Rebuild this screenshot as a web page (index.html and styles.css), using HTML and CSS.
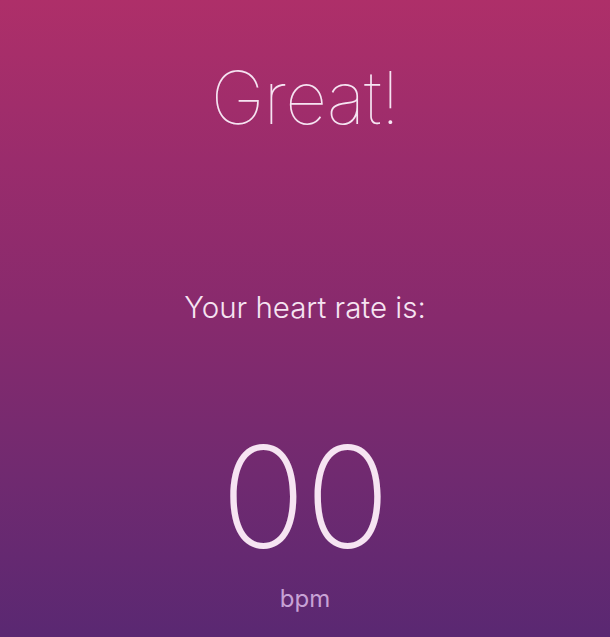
FILE: index.html
```html
<!DOCTYPE html>
<html>
<head>
<meta charset="utf-8">
<link rel="stylesheet" href="styles.css">
</head>
<body>
<main class="screen">
  <h1 class="title">Great!</h1>
  <p class="label">Your heart rate is:</p>
  <div class="rate">00</div>
  <div class="unit">bpm</div>
</main>
</body>
</html>
```
FILE: styles.css
```css
html, body {
  margin: 0;
  padding: 0;
}
.screen {
  width: 610px;
  height: 637px;
  box-sizing: border-box;
  background: linear-gradient(180deg, #ae2f69 0%, #9a2c6c 25%, #872a6d 50%, #702a70 75%, #5a2872 100%);
  display: flex;
  flex-direction: column;
  align-items: center;
  font-family: Inter, "Noto Sans", sans-serif;
  color: #f6e4f2;
  overflow: hidden;
}
.title {
  margin: 58px 0 0;
  font-size: 73px;
  font-weight: 100;
  line-height: 80px;
  letter-spacing: -1px;
}
.label {
  margin: 152px 0 0;
  font-size: 29.5px;
  font-weight: 300;
  line-height: 34px;
}
.rate {
  margin: 100px 0 0;
  font-size: 141px;
  font-weight: 150;
  line-height: 146px;
  letter-spacing: -1px;
}
.unit {
  margin: 14px 0 0;
  font-size: 24px;
  font-weight: 400;
  line-height: 30px;
  color: #c8a2d6;
}
```
